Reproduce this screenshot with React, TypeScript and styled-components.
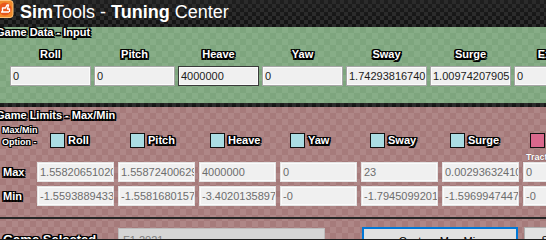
import React from "react";
import styled, { createGlobalStyle, css } from "styled-components";

const GlobalStyle = createGlobalStyle`
  html, body {
    margin: 0;
    padding: 0;
    background: #1c1c1c;
    overflow: hidden;
  }
  body {
    font-family: "Liberation Sans", Arial, sans-serif;
  }
  * {
    box-sizing: border-box;
  }
`;

// small checker pattern used by the panels
const checker = (base: string, light: string, cell: number) => css`
  background-color: ${base};
  background-image: conic-gradient(
    ${light} 25%,
    transparent 0 50%,
    ${light} 0 75%,
    transparent 0
  );
  background-size: ${cell * 2}px ${cell * 2}px;
`;

const carbon = css`
  background-color: #161616;
  background-image: conic-gradient(
      #2b2b2b 25%,
      transparent 0 50%,
      #2b2b2b 0 75%,
      transparent 0
    ),
    linear-gradient(#1f1f1f, #121212);
  background-size: 8px 8px, 100% 100%;
`;

const outlined = css`
  color: #fff;
  font-weight: bold;
  text-shadow: -1.5px -1.5px 0 #000, 0 -1.5px 0 #000, 1.5px -1.5px 0 #000,
    1.5px 0 0 #000, 1.5px 1.5px 0 #000, 0 1.5px 0 #000, -1.5px 1.5px 0 #000,
    -1.5px 0 0 #000;
`;

const Page = styled.div`
  width: 546px;
  height: 239px;
  overflow: hidden;
  display: flex;
  flex-direction: column;
`;

const TitleBar = styled.div`
  ${carbon};
  height: 27px;
  flex: none;
  display: flex;
  align-items: flex-start;
  gap: 6px;
`;

const LogoBox = styled.svg`
  flex: none;
`;

const TitleText = styled.div`
  color: #fff;
  font-size: 18px;
  line-height: 24px;
  white-space: nowrap;

  b {
    font-weight: bold;
  }
`;

const GreenPanel = styled.div`
  ${checker("#7ea57e", "#87ad87", 6)};
  height: 76px;
  flex: none;
  display: flex;
  flex-direction: column;
`;

const SectionTitle = styled.div<{ $top: number }>`
  ${outlined};
  font-size: 11px;
  line-height: 12px;
  margin-top: ${(p) => p.$top}px;
  margin-left: -4px;
  white-space: nowrap;
`;

const AxisGrid = styled.div`
  display: grid;
  grid-template-columns: repeat(7, 81px);
  grid-template-rows: 14px 20px;
  column-gap: 3px;
  row-gap: 5px;
  padding-left: 10px;
  margin-top: 9px;
`;

const AxisLabel = styled.div`
  ${outlined};
  font-size: 11px;
  line-height: 14px;
  text-align: center;
  white-space: nowrap;
`;

type Tone = "active" | "focus" | "locked";

const Field = styled.input<{ $tone: Tone }>`
  width: 100%;
  height: 20px;
  margin: 0;
  padding: 0 0 0 2px;
  font-family: "Liberation Sans", Arial, sans-serif;
  font-size: 11px;
  background: #f0f0f0;
  outline: none;
  border: 1px solid
    ${(p) =>
      p.$tone === "focus" ? "#3a3a3a" : p.$tone === "active" ? "#a6a6a6" : "#e4e4e4"};
  box-shadow: inset 0 0 0 1px #fbfbfb;
  color: ${(p) => (p.$tone === "locked" ? "#6d6d6d" : "#1c1c1c")};
`;

const CarbonStrip = styled.div`
  ${carbon};
  height: 4px;
  flex: none;
`;

const PinkPanel = styled.div`
  ${checker("#a67b7b", "#af8787", 6)};
  flex: 1;
  display: flex;
  flex-direction: column;
`;

const OptionRow = styled.div`
  display: flex;
  height: 24px;
  margin-top: 3px;
`;

const OptionCaption = styled.div`
  ${outlined};
  text-shadow: -1px -1px 0 #000, 1px -1px 0 #000, 1px 1px 0 #000,
    -1px 1px 0 #000, 0 1px 0 #000, 0 -1px 0 #000, 1px 0 0 #000, -1px 0 0 #000;
  width: 50px;
  flex: none;
  padding-left: 2px;
  font-size: 9px;
  line-height: 12px;
  white-space: nowrap;
`;

const OptionItem = styled.div`
  width: 80px;
  flex: none;
  display: flex;
  align-items: flex-end;
  gap: 3px;
`;

const Swatch = styled.span<{ $fill: string }>`
  width: 15px;
  height: 15px;
  flex: none;
  background: ${(p) => p.$fill};
  border: 1px solid #111;
`;

const OptionText = styled.span`
  ${outlined};
  font-size: 11px;
  line-height: 15px;
  white-space: nowrap;
`;

const LimitsBlock = styled.div`
  display: flex;
  flex-direction: column;
  gap: 4px;
`;

const LimitRow = styled.div<{ $h: number }>`
  display: grid;
  grid-template-columns: 33px repeat(7, 77px);
  column-gap: 4px;
  height: ${(p) => p.$h}px;
`;

const Hint = styled.div`
  grid-column: 8;
  color: #fff;
  font-weight: bold;
  font-size: 9px;
  line-height: 18px;
  height: 10px;
  padding-left: 3px;
  white-space: nowrap;
  text-shadow: 0 0 1px #5a3a3a;
`;

const LimitLabel = styled.div`
  ${outlined};
  font-size: 11px;
  line-height: 20px;
  padding-left: 3px;
`;

const Rule = styled.div`
  height: 2px;
  background: #272727;
  margin-top: 11px;
  flex: none;
`;

const BottomRow = styled.div`
  display: flex;
  align-items: flex-start;
  margin-top: 8px;
`;

const GameLabel = styled.div`
  ${outlined};
  width: 118px;
  flex: none;
  padding-left: 3px;
  margin-top: 5px;
  font-size: 13px;
  line-height: 16px;
  white-space: nowrap;
`;

const Combo = styled.div`
  width: 207px;
  height: 24px;
  flex: none;
  margin-top: 1px;
  display: flex;
  align-items: flex-start;
  justify-content: space-between;
  padding: 4px 6px 0 4px;
  background: #d5d5d5;
  border: 1px solid #bcbcbc;
  color: #7c7c7c;
  font-size: 11px;
  line-height: 14px;
`;

const Chevron = styled.svg`
  margin-top: 8px;
`;

const Button = styled.button<{ $primary?: boolean }>`
  height: 30px;
  flex: none;
  margin: 0 0 0 ${(p) => (p.$primary ? 37 : 6)}px;
  width: ${(p) => (p.$primary ? 156 : 60)}px;
  padding: 5px 0 0;
  display: flex;
  justify-content: center;
  align-items: flex-start;
  background: #e1e1e1;
  border: ${(p) => (p.$primary ? "2px solid #0078d7" : "1px solid #adadad")};
  font-family: "Liberation Sans", Arial, sans-serif;
  font-size: 11px;
  line-height: 14px;
  color: #000;
`;

const axes = ["Roll", "Pitch", "Heave", "Yaw", "Sway", "Surge", "Extra1"];

const inputs = ["0", "0", "4000000", "0", "1.74293816740", "1.00974207905", "0"];

const maxValues = [
  "1.55820651020",
  "1.55872400629",
  "4000000",
  "0",
  "23",
  "0.00293632410",
  "0",
];

const minValues = [
  "-1.5593889433",
  "-1.5581680157",
  "-3.4020135897",
  "-0",
  "-1.7945099201",
  "-1.5969947447",
  "-0",
];

const Logo = () => (
  <LogoBox width="14" height="18" viewBox="0 0 14 18">
    <rect x="-4" y="0.5" width="17" height="17" rx="3" fill="#f08a2a" stroke="#ffc27a" />
    <circle cx="5" cy="9" r="6.5" fill="#e8581c" />
    <path
      d="M1 12 h8 M2.5 12 v-4 h3 l1.5 -3 h1.5 l-1 4 h2 v3"
      fill="none"
      stroke="#fff"
      strokeWidth="1.4"
      strokeLinejoin="round"
    />
  </LogoBox>
);

export default function App() {
  return (
    <>
      <GlobalStyle />
      <Page>
        <TitleBar>
          <Logo />
          <TitleText>
            <b>Sim</b>Tools - <b>Tuning</b> Center
          </TitleText>
        </TitleBar>

        <GreenPanel>
          <SectionTitle $top={-1}>Game Data - Input</SectionTitle>
          <AxisGrid>
            {axes.map((a) => (
              <AxisLabel key={a}>{a}</AxisLabel>
            ))}
            {inputs.map((v, i) => (
              <Field
                key={i}
                readOnly
                value={v}
                $tone={axes[i] === "Heave" ? "focus" : "active"}
              />
            ))}
          </AxisGrid>
        </GreenPanel>

        <CarbonStrip />

        <PinkPanel>
          <SectionTitle $top={2}>Game Limits - Max/Min</SectionTitle>
          <OptionRow>
            <OptionCaption>
              Max/Min
              <br />
              Option -
            </OptionCaption>
            {axes.map((a, i) => (
              <OptionItem key={a}>
                <Swatch $fill={i === 6 ? "#d9688c" : "#abdde3"} />
                <OptionText>{a}</OptionText>
              </OptionItem>
            ))}
          </OptionRow>

          <LimitsBlock>
            <LimitRow $h={10}>
              <Hint>Traction Loss</Hint>
            </LimitRow>
            <LimitRow $h={20}>
              <LimitLabel>Max</LimitLabel>
              {maxValues.map((v, i) => (
                <Field key={i} readOnly value={v} $tone="locked" />
              ))}
            </LimitRow>
            <LimitRow $h={20}>
              <LimitLabel>Min</LimitLabel>
              {minValues.map((v, i) => (
                <Field key={i} readOnly value={v} $tone="locked" />
              ))}
            </LimitRow>
          </LimitsBlock>

          <Rule />

          <BottomRow>
            <GameLabel>Game Selected</GameLabel>
            <Combo>
              <span>F1 2021</span>
              <Chevron width="8" height="5" viewBox="0 0 8 5">
                <path d="M0.5 0.5 L4 4 L7.5 0.5" fill="none" stroke="#8a8a8a" />
              </Chevron>
            </Combo>
            <Button $primary>Custom Max Min</Button>
            <Button>Save</Button>
          </BottomRow>
        </PinkPanel>
      </Page>
    </>
  );
}
